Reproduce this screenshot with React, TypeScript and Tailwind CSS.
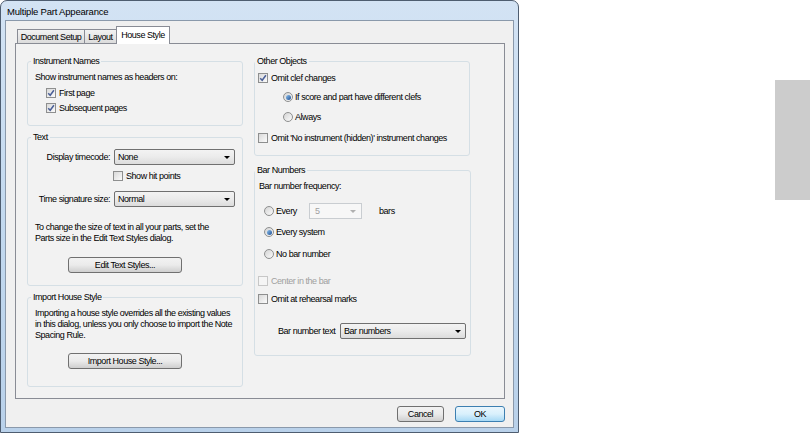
import type { ReactNode } from 'react';

function CheckBox({ checked, disabled }: { checked?: boolean; disabled?: boolean }) {
  return (
    <span
      className={
        disabled
          ? 'flex h-[10px] w-[10px] shrink-0 items-center justify-center border border-[#c7c7c7] bg-[#f5f5f5]'
          : 'flex h-[10px] w-[10px] shrink-0 items-center justify-center border border-[#8e8f8f] bg-gradient-to-br from-[#d9d9d9] to-[#fbfbfb]'
      }
    >
      {checked && (
        <svg width="8" height="8" viewBox="0 0 8 8">
          <path d="M1.2 4.2 L3.2 6.3 L6.9 1.3" fill="none" stroke="#4a5f97" strokeWidth="1.5" />
        </svg>
      )}
    </span>
  );
}

function Radio({ checked }: { checked?: boolean }) {
  return (
    <span className="flex h-[10px] w-[10px] shrink-0 items-center justify-center rounded-full border border-[#8e8f8f] bg-gradient-to-br from-[#d4d4d4] to-[#fbfbfb]">
      {checked && (
        <span className="h-[5px] w-[5px] rounded-full bg-gradient-to-br from-[#8fc2ee] to-[#1f4f93]" />
      )}
    </span>
  );
}

function CheckRow({
  label,
  checked,
  disabled,
  className,
}: {
  label: string;
  checked?: boolean;
  disabled?: boolean;
  className?: string;
}) {
  return (
    <div className={'flex h-[14px] items-center gap-[3px] ' + (className ?? '')}>
      <CheckBox checked={checked} disabled={disabled} />
      <span className={disabled ? 'text-[#a0a0a0]' : ''}>{label}</span>
    </div>
  );
}

function RadioRow({ label, checked, className }: { label: string; checked?: boolean; className?: string }) {
  return (
    <div className={'flex h-[14px] items-center gap-[2px] ' + (className ?? '')}>
      <Radio checked={checked} />
      <span>{label}</span>
    </div>
  );
}

function Arrow({ color = '#000' }: { color?: string }) {
  return (
    <svg width="6" height="3" viewBox="0 0 6 3" className="shrink-0">
      <polygon points="0,0 6,0 3,3" fill={color} />
    </svg>
  );
}

function Select({ value, className }: { value: string; className?: string }) {
  return (
    <div
      className={
        'flex h-[16px] items-center justify-between rounded-[2px] border border-[#707070] bg-gradient-to-b from-[#f3f3f3] via-[#ebebeb] to-[#dcdcdc] pl-[3px] pr-[4px] ' +
        (className ?? '')
      }
    >
      <span>{value}</span>
      <Arrow />
    </div>
  );
}

function Button({ children, primary, className }: { children: ReactNode; primary?: boolean; className?: string }) {
  return (
    <div
      className={
        (primary
          ? 'border-[#3c7fb1] from-[#eaf6fd] via-[#d9f0fc] to-[#a7d9f5] '
          : 'border-[#707070] from-[#f2f2f2] via-[#ebebeb] to-[#cfcfcf] ') +
        'flex h-[16px] items-center justify-center rounded-[3px] border bg-gradient-to-b ' +
        (className ?? '')
      }
    >
      {children}
    </div>
  );
}

function Group({
  title,
  className,
  children,
}: {
  title: string;
  className?: string;
  children: ReactNode;
}) {
  return (
    <fieldset className={'rounded-[3px] border border-[#d5dfe5] ' + (className ?? '')}>
      <legend className="-ml-[4px] px-[2px] leading-[12px]">{title}</legend>
      {children}
    </fieldset>
  );
}

function Tab({ label, selected, className }: { label: string; selected?: boolean; className?: string }) {
  return (
    <div
      className={
        (selected
          ? 'relative z-10 -mb-px h-[18px] bg-white pb-[2px] '
          : 'h-[14px] bg-gradient-to-b from-[#f2f2f2] to-[#dcdcdc] ') +
        'flex items-center justify-center border border-b-0 border-[#898c95] ' +
        (className ?? '')
      }
    >
      {label}
    </div>
  );
}

export default function App() {
  return (
    <div className="flex h-[433px] w-[810px] overflow-hidden bg-white font-['Liberation_Sans',Arial,sans-serif] text-[9px] leading-[12px] tracking-[-0.45px] text-black">
      <div className="flex h-[433px] w-[519px] shrink-0 flex-col rounded-t-[7px] border border-[#4e5d70] bg-gradient-to-b from-[#d3e3f4] via-[#c3d9ef] to-[#b9d1ea] px-[4px]">
        <div className="flex h-[19px] items-center pl-[2px] pt-[3px] text-[9.5px] tracking-[-0.2px]">
          Multiple Part Appearance
        </div>

        <div className="flex h-[408px] flex-col border border-[#8a99ab] bg-[#f0f0f0] pl-[9px] pr-[8px] pt-[5px]">
          <div className="flex h-[17px] items-end pl-[2px]">
            <Tab label="Document Setup" className="w-[68px]" />
            <Tab label="Layout" className="-ml-px w-[33px]" />
            <Tab label="House Style" selected className="-ml-px w-[54px]" />
          </div>

          <div className="flex h-[356px] gap-[11px] border border-[#898c95] bg-[#f2f2f2] pl-[11px] pt-[11px]">
            <div className="flex w-[216px] flex-col">
              <Group title="Instrument Names" className="h-[71px] px-[7px]">
                <div className="mt-[4px] h-[12px]">Show instrument names as headers on:</div>
                <CheckRow label="First page" checked className="ml-[11px] mt-[3px]" />
                <CheckRow label="Subsequent pages" checked className="ml-[11px] mt-[1px]" />
              </Group>

              <Group title="Text" className="mt-[5px] h-[155px] px-[7px]">
                <div className="mt-[6px] flex h-[16px] items-center">
                  <span className="w-[75px] text-right">Display timecode:</span>
                  <Select value="None" className="ml-[4px] w-[121px]" />
                </div>
                <CheckRow label="Show hit points" className="ml-[78px] mt-[4px]" />
                <div className="mt-[8px] flex h-[16px] items-center">
                  <span className="w-[75px] text-right">Time signature size:</span>
                  <Select value="Normal" className="ml-[4px] w-[121px]" />
                </div>
                <div className="mt-[15px] whitespace-nowrap leading-[11px]">
                  To change the size of text in all your parts, set the
                  <br />
                  Parts size in the Edit Text Styles dialog.
                </div>
                <Button className="ml-[33px] mt-[13px] w-[114px]">Edit Text Styles...</Button>
              </Group>

              <Group title="Import House Style" className="mt-[5px] h-[96px] px-[7px]">
                <div className="mt-[5px] whitespace-nowrap leading-[11px]">
                  Importing a house style overrides all the existing values
                  <br />
                  in this dialog, unless you only choose to import the Note
                  <br />
                  Spacing Rule.
                </div>
                <Button className="ml-[33px] mt-[12px] w-[114px]">Import House Style...</Button>
              </Group>
            </div>

            <div className="flex w-[216px] flex-col">
              <Group title="Other Objects" className="h-[101px] px-[4px]">
                <CheckRow label="Omit clef changes" checked className="-ml-px mt-[4px]" />
                <RadioRow label="If score and part have different clefs" checked className="ml-[24px] mt-[5px]" />
                <RadioRow label="Always" className="ml-[24px] mt-[6px]" />
                <CheckRow label="Omit 'No instrument (hidden)' instrument changes" className="-ml-px mt-[7px]" />
              </Group>

              <Group title="Bar Numbers" className="mt-[8px] h-[192px] px-[4px]">
                <div className="mt-[4px] h-[12px]">Bar number frequency:</div>
                <div className="mt-[11px] flex h-[16px] items-center">
                  <RadioRow label="Every" className="ml-[5px] w-[45px]" />
                  <div className="flex h-[16px] w-[53px] items-center justify-between border border-[#c9cdd1] bg-[#f7f7f7] pl-[5px] pr-[5px] text-[#a0a0a0]">
                    <span>5</span>
                    <Arrow color="#b0b0b0" />
                  </div>
                  <span className="ml-[17px]">bars</span>
                </div>
                <RadioRow label="Every system" checked className="ml-[5px] mt-[6px]" />
                <RadioRow label="No bar number" className="ml-[5px] mt-[8px]" />
                <CheckRow label="Center in the bar" disabled className="-ml-px mt-[13px]" />
                <CheckRow label="Omit at rehearsal marks" className="-ml-px mt-[4px]" />
                <div className="mt-[17px] flex h-[16px] items-center">
                  <span className="ml-[19px] w-[62px]">Bar number text</span>
                  <Select value="Bar numbers" className="w-[126px]" />
                </div>
              </Group>
            </div>
          </div>

          <div className="mt-[7px] flex justify-end gap-[11px]">
            <Button className="w-[47px]">Cancel</Button>
            <Button primary className="w-[50px]">
              OK
            </Button>
          </div>
        </div>
      </div>

      <div className="ml-auto mt-[80px] h-[120px] w-[35px] bg-[#cccccc]" />
    </div>
  );
}
